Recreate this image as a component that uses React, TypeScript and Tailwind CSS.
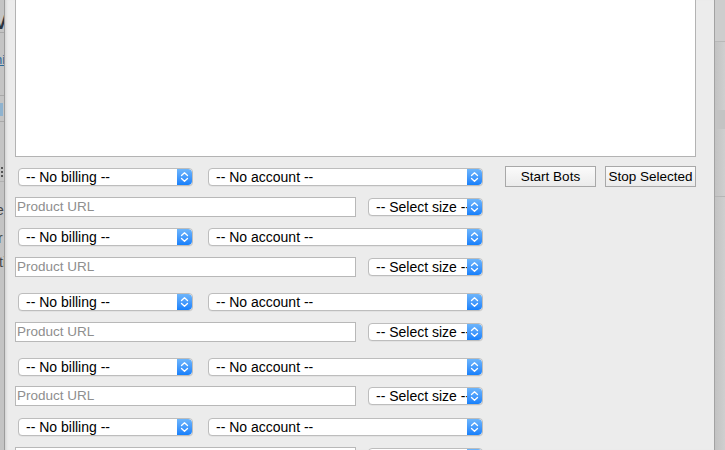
import React from "react";

const font = { fontFamily: '"Liberation Sans", Arial, Helvetica, sans-serif' };

function Stepper() {
  return (
    <div className="flex h-full w-[15px] shrink-0 items-center justify-center rounded-r-[4px] bg-gradient-to-b from-[#6db5fb] to-[#1580fb]">
      <svg width="9" height="12" viewBox="0 0 9 12" fill="none">
        <path d="M1.5 4.5 L4.5 1.8 L7.5 4.5" stroke="white" strokeWidth="1.3" strokeLinecap="round" strokeLinejoin="round" />
        <path d="M1.5 7.5 L4.5 10.2 L7.5 7.5" stroke="white" strokeWidth="1.3" strokeLinecap="round" strokeLinejoin="round" />
      </svg>
    </div>
  );
}

function Select({ label, width }: { label: string; width: string }) {
  return (
    <div
      className={`flex h-[18px] shrink-0 overflow-hidden rounded-[4px] border border-[#bdbdbd] bg-white shadow-[0_0.5px_0.5px_rgba(0,0,0,0.08)] ${width}`}
    >
      <div className="flex-1 overflow-hidden whitespace-nowrap pl-[7px] text-[14px] leading-[16px] text-black">
        {label}
      </div>
      <Stepper />
    </div>
  );
}

function UrlInput() {
  return (
    <div className="flex h-[20px] w-[341px] shrink-0 items-center border border-[#b8b8b8] bg-white pl-[1px] text-[13.5px] leading-[18px] text-[#8e8e8e]">
      Product URL
    </div>
  );
}

function Button({ label }: { label: string }) {
  return (
    <div className="flex h-[21px] w-[91px] shrink-0 items-center justify-center border border-[#a8a8a8] bg-gradient-to-b from-[#fbfbfb] to-[#ebebeb] text-[13.5px] leading-[16px] text-black">
      {label}
    </div>
  );
}

function BillingRow({ mt, buttons }: { mt: string; buttons?: boolean }) {
  return (
    <div className={`flex items-start ${mt}`}>
      <div className={`ml-[3px] flex gap-[15px] ${buttons ? "mt-[2px]" : ""}`}>
        <Select label="-- No billing --" width="w-[175px]" />
        <Select label="-- No account --" width="w-[275px]" />
      </div>
      {buttons && (
        <div className="ml-[22px] flex gap-[9px]">
          <Button label="Start Bots" />
          <Button label="Stop Selected" />
        </div>
      )}
    </div>
  );
}

function UrlRow({ mt }: { mt: string }) {
  return (
    <div className={`flex items-start ${mt}`}>
      <UrlInput />
      <div className="ml-[12px] mt-[1px]">
        <Select label="-- Select size --" width="w-[115px]" />
      </div>
    </div>
  );
}

export default function App() {
  return (
    <div className="flex h-[450px] w-[725px] overflow-hidden bg-[#ececec]" style={font}>
      {/* background page glimpse, left */}
      <div className="flex w-[4px] shrink-0 flex-col overflow-hidden bg-[#c4c4c4]">
        <div className="h-[12px] shrink-0" />
        <div className="-ml-[6px] h-[20px] shrink-0 text-[20px] font-bold leading-[20px] text-[#2c3440]">V</div>
        <div className="h-[1px] shrink-0 bg-[#a9a9a9]" />
        <div className="h-[20px] shrink-0" />
        <div className="-ml-[5px] h-[16px] shrink-0 text-[13px] leading-[14px] text-[#2b6a9a] underline">ni</div>
        <div className="h-[26px] shrink-0" />
        <div className="h-[1px] shrink-0 bg-[#a9a9a9]" />
        <div className="h-[7px] shrink-0" />
        <div className="h-[13px] w-[3px] shrink-0 bg-[#8fb3cf]" />
        <div className="h-[5px] shrink-0" />
        <div className="h-[1px] shrink-0 bg-[#a9a9a9]" />
        <div className="h-[45px] shrink-0" />
        <div className="flex h-[12px] shrink-0 flex-col gap-[2px] pl-[1px]">
          <div className="h-[2px] w-[2px] bg-[#555]" />
          <div className="h-[2px] w-[2px] bg-[#555]" />
          <div className="h-[2px] w-[2px] bg-[#555]" />
        </div>
        <div className="h-[2px] shrink-0" />
        <div className="h-[1px] shrink-0 bg-[#b0b0b0]" />
        <div className="h-[20px] shrink-0" />
        <div className="-ml-[4px] h-[28px] shrink-0 text-[14px] leading-[16px] text-[#444]">e</div>
        <div className="-ml-[2px] h-[24px] shrink-0 text-[14px] leading-[16px] text-[#444]">r</div>
        <div className="-ml-[1px] h-[20px] shrink-0 text-[14px] leading-[16px] text-[#444]">ti</div>
      </div>
      <div className="w-[1px] shrink-0 bg-[#9c9c9c]" />

      {/* popup */}
      <div className="flex w-[709px] shrink-0 flex-col bg-[#ececec] pl-[10px] shadow-[inset_3px_0_3px_-2px_rgba(0,0,0,0.12)]">
        <div className="h-[157px] w-[681px] shrink-0 border-x border-b border-[#b3b3b3] bg-white" />
        <BillingRow mt="mt-[9px]" buttons />
        <UrlRow mt="mt-[10px]" />
        <BillingRow mt="mt-[11px]" />
        <UrlRow mt="mt-[11px]" />
        <BillingRow mt="mt-[16px]" />
        <UrlRow mt="mt-[11px]" />
        <BillingRow mt="mt-[16px]" />
        <UrlRow mt="mt-[10px]" />
        <BillingRow mt="mt-[12px]" />
        <UrlRow mt="mt-[11px]" />
      </div>

      {/* background page glimpse, right */}
      <div className="w-[1px] shrink-0 bg-[#a2a2a2]" />
      <div className="flex w-[10px] shrink-0 flex-col bg-gradient-to-r from-[#c2c2c2] to-[#cfcfcf]">
        <div className="h-[41px] shrink-0 bg-[#cdcdcd]" />
        <div className="h-[1px] shrink-0 bg-[#b8b8b8]" />
        <div className="h-[68px] shrink-0" />
        <div className="h-[19px] shrink-0 bg-[#c3c3c3]" />
        <div className="h-[67px] shrink-0" />
        <div className="h-[1px] shrink-0 bg-[#b5b5b5]" />
        <div className="flex-1" />
      </div>
    </div>
  );
}
